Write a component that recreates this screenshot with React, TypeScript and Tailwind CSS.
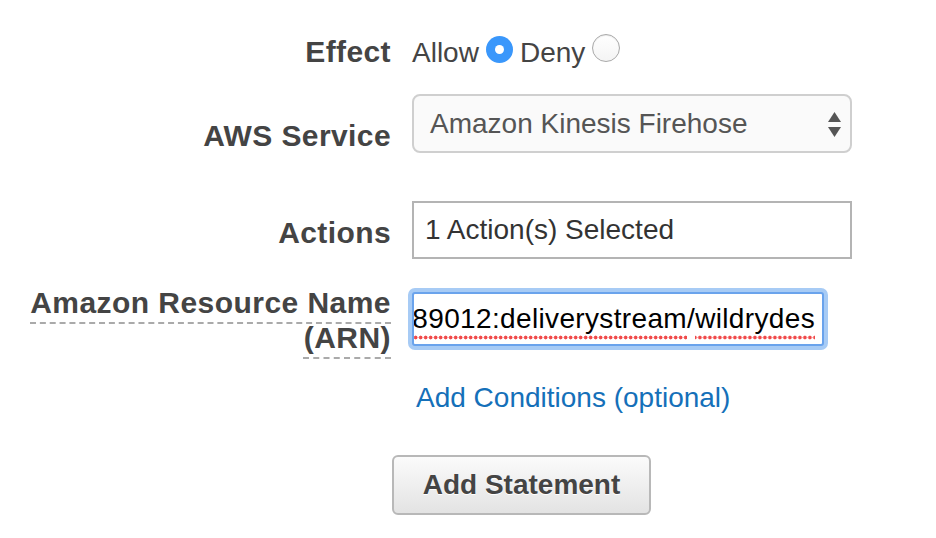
export default function App() {
  return (
    <main className="w-[936px] h-[538px] bg-white font-['Liberation_Sans',Arial,sans-serif] text-[#444] flex flex-col">
      {/* Effect */}
      <div className="flex items-start h-[30px] mt-[37px]">
        <div className="w-[391px] text-right text-[30px] leading-[30px] font-bold tracking-[0.4px]">Effect</div>
        <div className="ml-[21px] flex items-start">
          <span className="text-[28px] leading-[30px] mt-[1px]">Allow</span>
          <span className="ml-[7px] -mt-[1px] w-[27px] h-[27px] rounded-full bg-[#3a97fb] flex items-center justify-center">
            <span className="w-[9px] h-[9px] rounded-full bg-white" />
          </span>
          <span className="ml-[7px] text-[28px] leading-[30px] mt-[1px]">Deny</span>
          <span className="ml-[7px] -mt-[3px] w-[28px] h-[28px] rounded-full border border-[#a9a9a9] bg-gradient-to-b from-white to-[#f4f4f4] shadow-[inset_0_1px_1px_rgba(0,0,0,0.08)]" />
        </div>
      </div>

      {/* AWS Service */}
      <div className="flex items-start h-[59px] mt-[27px]">
        <div className="w-[391px] text-right text-[30px] leading-[30px] font-bold tracking-[0.4px] mt-[27px]">AWS Service</div>
        <div className="ml-[21px] w-[440px] h-[59px] rounded-[8px] border-2 border-[#cfcfcf] bg-[#fafafa] flex items-center justify-between pl-[16px] pr-[9px]">
          <span className="text-[28px] leading-[30px] text-[#555]">Amazon Kinesis Firehose</span>
          <svg width="13" height="26" viewBox="0 0 13 26" className="mt-[2px]">
            <path d="M6.5 0 L13 10 L0 10 Z" fill="#555" />
            <path d="M0 15 L13 15 L6.5 25 Z" fill="#555" />
          </svg>
        </div>
      </div>

      {/* Actions */}
      <div className="flex items-start h-[58px] mt-[48px]">
        <div className="w-[391px] text-right text-[30px] leading-[30px] font-bold tracking-[0.4px] mt-[17px]">Actions</div>
        <div className="ml-[21px] w-[440px] h-[58px] border-2 border-[#b4b4b4] bg-white flex items-center pl-[11px]">
          <span className="text-[28px] leading-[30px] text-[#333]">1 Action(s) Selected</span>
        </div>
      </div>

      {/* ARN */}
      <div className="flex items-start h-[54px] mt-[33px]">
        <div className="w-[391px] shrink-0 text-right text-[30px] leading-[35px] font-bold tracking-[0.45px] -mt-[7px]">
          <span className="underline decoration-dashed decoration-[#aaa] decoration-[1.5px] underline-offset-[9px]">
            Amazon Resource Name
          </span>
          <br />
          <span className="underline decoration-dashed decoration-[#aaa] decoration-[1.5px] underline-offset-[9px]">
            (ARN)
          </span>
        </div>
        <div className="ml-[21px] w-[412px] h-[54px] rounded-[3px] border-2 border-[#6aa3ec] shadow-[0_0_0_4px_#a7cbf5] bg-white flex justify-end items-center overflow-hidden pr-[7px]">
          <span className="whitespace-nowrap text-[28px] leading-[30px] text-black tracking-[0.35px]">
            <span className="pb-[6px] bg-[radial-gradient(circle,#f04a4a_1.7px,transparent_2.2px)] bg-[length:5px_5px] bg-repeat-x bg-bottom">
              arn:aws:firehose:us-east-1:123456789012:deliverystream
            </span>
            /
            <span className="pb-[6px] bg-[radial-gradient(circle,#f04a4a_1.7px,transparent_2.2px)] bg-[length:5px_5px] bg-repeat-x bg-bottom">
              wildrydes
            </span>
          </span>
        </div>
      </div>

      {/* Add Conditions */}
      <div className="flex h-[30px] mt-[37px]">
        <a className="ml-[416px] text-[28px] leading-[30px] text-[#1570b9] cursor-pointer">Add Conditions (optional)</a>
      </div>

      {/* Add Statement */}
      <div className="flex mt-[42px]">
        <button className="ml-[392px] w-[259px] h-[60px] rounded-[6px] border-2 border-[#b8b8b8] bg-gradient-to-b from-[#fbfbfb] to-[#e3e3e3] text-[28px] leading-[30px] font-bold text-[#444] [text-shadow:0_1px_0_#fff]">
          Add Statement
        </button>
      </div>
    </main>
  );
}
